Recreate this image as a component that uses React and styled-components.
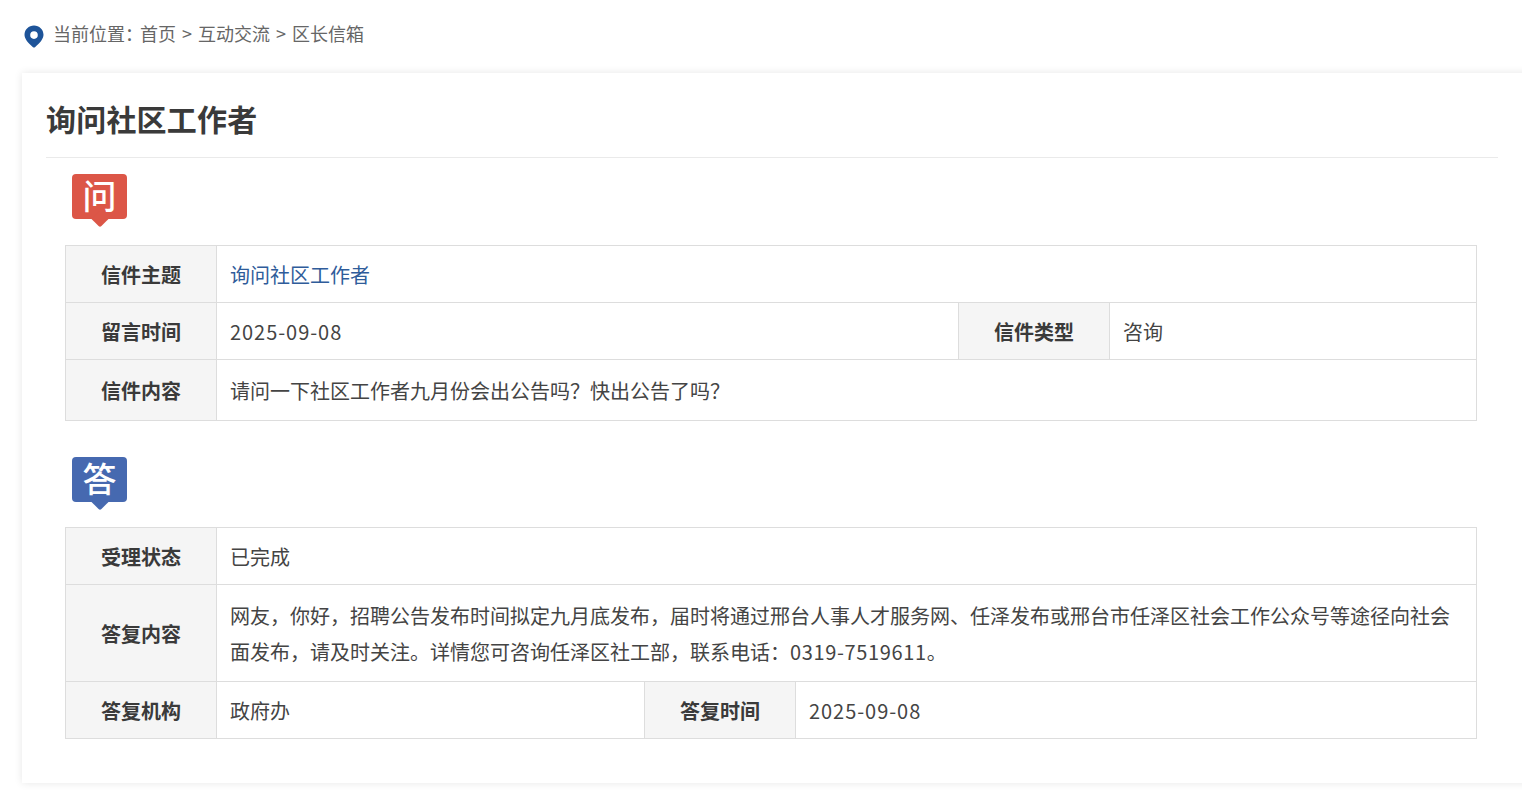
import React from "react";
import styled, { createGlobalStyle } from "styled-components";

const Global = createGlobalStyle`
  html, body { margin: 0; padding: 0; background: #fff; overflow: hidden; }
  body { font-family: "Noto Sans CJK SC", "Liberation Sans", sans-serif; color: #333; }
`;
const Page = styled.div`
  width: 1522px; height: 795px; overflow: hidden; padding: 0 0 0 22px; box-sizing: border-box;
`;
const Crumbs = styled.nav`
  height: 73px; display: flex; align-items: center; gap: 6px; padding: 0 0 4px 0; box-sizing: border-box;
  font-size: 18px; color: #666; white-space: pre;
`;
const PinIcon = styled.svg`
  flex: none; margin: 2px 1px 0 0;
`;
const Crumb = styled.span`
  margin-top: -3px;
`;
const Colon = styled.span`
  letter-spacing: -3px;
`;
const Card = styled.main`
  width: 1540px; height: 710px; box-sizing: border-box; background: #fff;
  box-shadow: 0 0 8px rgba(0,0,0,.1); padding: 0 0 0 24px;
`;
const Title = styled.h1`
  width: 1452px; height: 85px; margin: 0; box-sizing: border-box; border-bottom: 1px solid #eaeaea;
  font-size: 30px; line-height: 90px; font-weight: 700; color: #3a3a3a; letter-spacing: .2px;
`;
const Section = styled.section`
  width: 1412px; margin-left: 19px;
`;
const BadgeWrap = styled.div`
  width: 56px; height: 53px; margin-left: 7px;
  padding-top: ${p => p.$top}px; margin-bottom: ${p => p.$bottom}px;
`;
const BadgeBox = styled.div`
  width: 55px; height: 45px; border-radius: 4px; background: ${p => p.$color};
  color: #fff; font-size: 34px; font-weight: 500; line-height: 41px; text-align: center; position: relative;
  &::after {
    content: ""; position: absolute; left: 21.5px; bottom: -6px; width: 12px; height: 12px;
    background: ${p => p.$color}; transform: rotate(45deg); border-bottom-right-radius: 2px;
  }
`;
const BadgeText = styled.span`
  position: relative; z-index: 1;
`;
const Table = styled.table`
  width: 1412px; border-collapse: collapse; table-layout: fixed; font-size: 20px;
`;
const Row = styled.tr`
  height: ${p => p.$h}px;
`;
const Label = styled.th`
  border: 1px solid #ddd; background: #f5f5f5; font-weight: 700; color: #3a3a3a;
  padding: 0; text-align: center; font-size: 20px;
`;
const Value = styled.td`
  border: 1px solid #ddd; padding: 2px 13px 0; color: #444; font-size: 20px; line-height: 36px;
`;
const Line = styled.div`
  white-space: nowrap;
`;
const Digits = styled.span`
  letter-spacing: ${p => p.$spacing}px;
`;
const LinkText = styled.a`
  color: #2f5c9a; text-decoration: none;
`;

const Pin = () => (
  <PinIcon width="24" height="24" viewBox="0 0 24 24">
    <path fill="#1e5499" fillRule="evenodd" d="M12 1.500c-5.200 0-9.500 4-9.500 9.300 0 3.900 3.500 8.300 8.500 12.400.6.500 1.400.500 2 0 5-4.100 8.500-8.500 8.500-12.400 0-5.300-4.300-9.300-9.500-9.300zm0 5.800a3.800 3.800 0 1 1 0 7.600 3.800 3.800 0 0 1 0-7.600z" />
  </PinIcon>
);

const Badge = ({ color, top, bottom, children }) => (
  <BadgeWrap $top={top} $bottom={bottom}>
    <BadgeBox $color={color}><BadgeText>{children}</BadgeText></BadgeBox>
  </BadgeWrap>
);

export default function App() {
  return (
    <Page>
      <Global />
      <Crumbs>
        <Pin />
        <Crumb>当前位置<Colon>：</Colon>首页</Crumb>
        <Crumb>&gt;</Crumb>
        <Crumb>互动交流</Crumb>
        <Crumb>&gt;</Crumb>
        <Crumb>区长信箱</Crumb>
      </Crumbs>
      <Card>
        <Title>询问社区工作者</Title>
        <Section>
          <Badge color="#dc5647" top={16} bottom={18}>问</Badge>
          <Table>
            <colgroup>
              <col style={{ width: 151 }} />
              <col style={{ width: 742 }} />
              <col style={{ width: 151 }} />
              <col />
            </colgroup>
            <tbody>
              <Row $h={57}>
                <Label>信件主题</Label>
                <Value colSpan={3}><LinkText href="#">询问社区工作者</LinkText></Value>
              </Row>
              <Row $h={57}>
                <Label>留言时间</Label>
                <Value><Digits $spacing={0.95}>2025-09-08</Digits></Value>
                <Label>信件类型</Label>
                <Value>咨询</Value>
              </Row>
              <Row $h={61}>
                <Label>信件内容</Label>
                <Value colSpan={3}>请问一下社区工作者九月份会出公告吗？快出公告了吗？</Value>
              </Row>
            </tbody>
          </Table>
          <Badge color="#4669b0" top={36} bottom={17}>答</Badge>
          <Table>
            <colgroup>
              <col style={{ width: 151 }} />
              <col style={{ width: 428 }} />
              <col style={{ width: 151 }} />
              <col />
            </colgroup>
            <tbody>
              <Row $h={57}>
                <Label>受理状态</Label>
                <Value colSpan={3}>已完成</Value>
              </Row>
              <Row $h={97}>
                <Label>答复内容</Label>
                <Value colSpan={3}>
                  <Line>网友，你好，招聘公告发布时间拟定九月底发布，届时将通过邢台人事人才服务网、任泽发布或邢台市任泽区社会工作公众号等途径向社会</Line>
                  <Line>面发布，请及时关注。详情您可咨询任泽区社工部，联系电话：<Digits $spacing={0.65}>0319-7519611</Digits>。</Line>
                </Value>
              </Row>
              <Row $h={57}>
                <Label>答复机构</Label>
                <Value>政府办</Value>
                <Label>答复时间</Label>
                <Value><Digits $spacing={0.95}>2025-09-08</Digits></Value>
              </Row>
            </tbody>
          </Table>
        </Section>
      </Card>
    </Page>
  );
}
